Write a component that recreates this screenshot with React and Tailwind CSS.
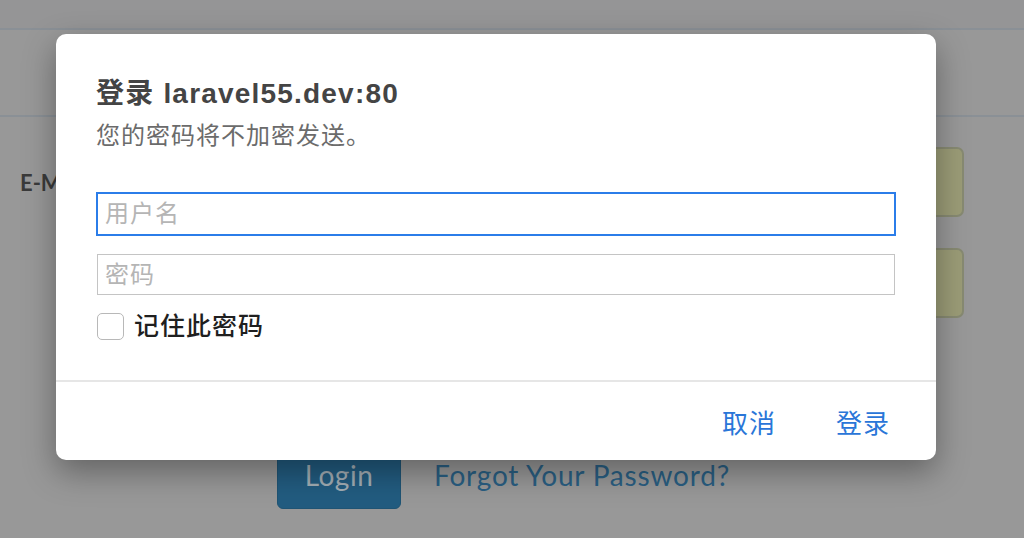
export default function App() {
  return (
    <div className="relative w-[1024px] h-[538px] overflow-hidden bg-[#989898] font-['Lato',sans-serif]">
      {/* page behind the dialog, dimmed */}
      <div className="h-[30px] bg-[#959596] border-b-2 border-[#8a9096]" />
      <div className="h-[87px] border-b-2 border-[#8a9096]" />
      <div className="flex flex-col">
        <div className="mt-[30px] h-[70px] flex items-center">
          <span className="pl-[20px] text-[22px] font-bold text-[#3a3a3a]">E-Mail Address</span>
          <div className="ml-auto mr-[60px] w-[544px] h-[70px] rounded-[7px] border-2 border-[#878a72] bg-[#9b9c77]" />
        </div>
        <div className="mt-[31px] h-[70px] flex items-center">
          <div className="ml-auto mr-[60px] w-[544px] h-[70px] rounded-[7px] border-2 border-[#878a72] bg-[#9b9c77]" />
        </div>
        <div className="mt-[127px] flex items-center pl-[277px]">
          <div className="w-[124px] h-[64px] pb-[4px] rounded-[6px] bg-[#225c80] border border-[#1f5474] flex items-center justify-center text-[28px] tracking-[0.5px] text-[#a3aeb5]">
            Login
          </div>
          <span className="ml-[33px] -mt-[4px] text-[28px] tracking-[0.8px] text-[#2a5f83]">Forgot Your Password?</span>
        </div>
      </div>

      {/* auth dialog */}
      <div className="absolute top-[34px] left-[56px] w-[880px] h-[426px] bg-white rounded-[10px] shadow-[0_12px_32px_rgba(0,0,0,0.35)] flex flex-col font-['Liberation_Sans','Noto_Sans_CJK_SC',sans-serif]">
        <div className="pt-[40px] px-[40px] flex flex-col">
          <div className="mt-[3px] text-[28px] leading-[34px] font-semibold tracking-[1.2px] text-[#444]">登录 laravel55.dev:80</div>
          <div className="mt-[9px] text-[24px] leading-[32px] tracking-[1px] text-[#6b6b6b]">您的密码将不加密发送。</div>
          <input
            className="mt-[40px] w-[800px] h-[44px] border-2 border-[#2b7de9] px-[7px] text-[24px] tracking-[1px] text-[#333] placeholder-[#b5b5b5] outline-none"
            placeholder="用户名"
          />
          <input
            className="mt-[18px] ml-[1px] w-[798px] h-[41px] border border-[#c4c4c4] px-[7px] text-[24px] tracking-[1px] text-[#333] placeholder-[#b5b5b5] outline-none"
            placeholder="密码"
          />
          <label className="mt-[18px] ml-[1px] flex items-center gap-[10px]">
            <span className="w-[27px] h-[27px] rounded-[5px] border border-[#b8b8b8] bg-white" />
            <span className="text-[25px] leading-[27px] font-medium tracking-[1px] text-[#1f1f1f]">记住此密码</span>
          </label>
        </div>
        <div className="mt-[40px] pt-[6px] border-t-2 border-[#e6e6e6] flex-1 flex items-center justify-end pr-[46px] gap-[60px] text-[26px] tracking-[1px] text-[#2a76d8]">
          <span>取消</span>
          <span>登录</span>
        </div>
      </div>
    </div>
  );
}
